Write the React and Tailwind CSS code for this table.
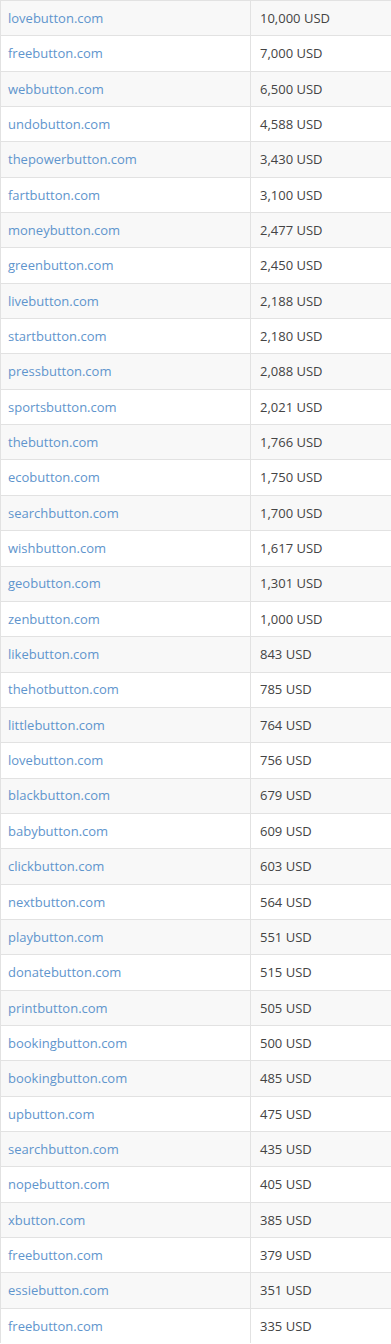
import React from 'react';

const rows = [
  ['lovebutton.com', '10,000 USD'],
  ['freebutton.com', '7,000 USD'],
  ['webbutton.com', '6,500 USD'],
  ['undobutton.com', '4,588 USD'],
  ['thepowerbutton.com', '3,430 USD'],
  ['fartbutton.com', '3,100 USD'],
  ['moneybutton.com', '2,477 USD'],
  ['greenbutton.com', '2,450 USD'],
  ['livebutton.com', '2,188 USD'],
  ['startbutton.com', '2,180 USD'],
  ['pressbutton.com', '2,088 USD'],
  ['sportsbutton.com', '2,021 USD'],
  ['thebutton.com', '1,766 USD'],
  ['ecobutton.com', '1,750 USD'],
  ['searchbutton.com', '1,700 USD'],
  ['wishbutton.com', '1,617 USD'],
  ['geobutton.com', '1,301 USD'],
  ['zenbutton.com', '1,000 USD'],
  ['likebutton.com', '843 USD'],
  ['thehotbutton.com', '785 USD'],
  ['littlebutton.com', '764 USD'],
  ['lovebutton.com', '756 USD'],
  ['blackbutton.com', '679 USD'],
  ['babybutton.com', '609 USD'],
  ['clickbutton.com', '603 USD'],
  ['nextbutton.com', '564 USD'],
  ['playbutton.com', '551 USD'],
  ['donatebutton.com', '515 USD'],
  ['printbutton.com', '505 USD'],
  ['bookingbutton.com', '500 USD'],
  ['bookingbutton.com', '485 USD'],
  ['upbutton.com', '475 USD'],
  ['searchbutton.com', '435 USD'],
  ['nopebutton.com', '405 USD'],
  ['xbutton.com', '385 USD'],
  ['freebutton.com', '379 USD'],
  ['essiebutton.com', '351 USD'],
  ['freebutton.com', '335 USD'],
];

const App = () => {
  return (
    <div className="w-[391px] bg-white text-[13px] font-['Open_Sans',sans-serif] border-l border-[#e2e2e2]">
      {rows.map(([domain, price], index) => (
        <div
          key={index}
          className={`grid grid-cols-[250px_1fr] h-[35.35px] pt-[1px] border-t border-[#e2e2e2] ${
            index % 2 === 0 ? 'bg-[#f8f8f8]' : 'bg-white'
          }`}
        >
          <div className="flex items-center pl-[7px] border-r border-[#e2e2e2] -mt-[1px]">
            <a href="#" className="text-[#5f95cd] pt-[1px]">{domain}</a>
          </div>
          <div className="flex items-center pl-[9px] text-[#444]">{price}</div>
        </div>
      ))}
    </div>
  );
};

export default App;
